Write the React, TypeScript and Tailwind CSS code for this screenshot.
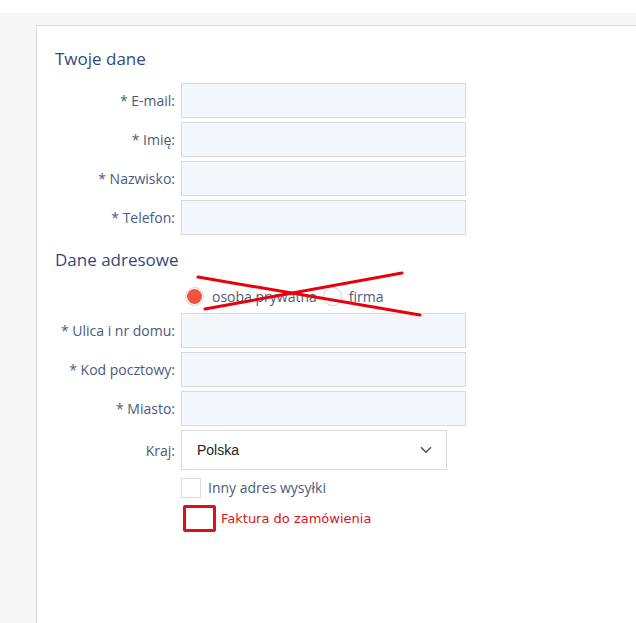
import { ChevronDown } from 'lucide-react';

const labelCls = "w-[144px] pr-[6px] text-right text-[14px] text-[#4b5a7a]"

function Field({ label }: { label: string }) {
  return (
    <div className="flex items-center h-[35px]">
      <label className={labelCls}>{label}</label>
      <input className="h-[35px] w-[285px] bg-[#f4f7fc] border border-[#d9d9d9] outline-none" />
    </div>
  )
}

export default function App() {
  return (
    <div className="relative h-[623px] w-[636px] overflow-hidden bg-white font-['Open_Sans',sans-serif]">
      <div className="mt-[13px] h-[610px] bg-[#f6f6f6] pl-[36px] pt-[12px]">
        <div className="h-full bg-white border-l border-t border-[#dcdcdc] pt-[21px]">
          {/* Twoje dane */}
          <h2 className="pl-[18px] text-[17px] leading-[24px] text-[#34497b]">Twoje dane</h2>
          <div className="mt-[12px] flex flex-col gap-[4px]">
            <Field label="* E-mail:" />
            <Field label="* Imię:" />
            <Field label="* Nazwisko:" />
            <Field label="* Telefon:" />
          </div>

          {/* Dane adresowe */}
          <h2 className="mt-[13px] pl-[18px] text-[17px] leading-[24px] text-[#34497b]">Dane adresowe</h2>
          <div className="mt-[12px] mb-[5px] flex h-[24px] items-center pl-[148px] text-[14px] text-[#4b5a7a]">
            <span className="flex h-[19px] w-[19px] items-center justify-center rounded-full border border-[#d4d4d4] bg-white">
              <span className="h-[15px] w-[15px] rounded-full bg-[#f2533f]" />
            </span>
            <span className="ml-[8px]">osoba prywatna</span>
            <span className="ml-[6px] h-[19px] w-[19px] rounded-full border border-[#d0d0d0] bg-white" />
            <span className="ml-[7px]">firma</span>
          </div>
          <div className="flex flex-col gap-[4px]">
            <Field label="* Ulica i nr domu:" />
            <Field label="* Kod pocztowy:" />
            <Field label="* Miasto:" />
            <div className="flex items-center h-[40px]">
              <label className={labelCls}>Kraj:</label>
              <div className="flex h-[40px] w-[266px] items-center justify-between border border-[#d9d9d9] bg-white pl-[15px] pr-[11px]">
                <span className="font-['Liberation_Sans',sans-serif] text-[14px] text-[#222]">Polska</span>
                <ChevronDown size={18} strokeWidth={2.2} className="text-[#555]" />
              </div>
            </div>
          </div>

          <div className="mt-[7px] flex items-center pl-[144px]">
            <span className="h-[20px] w-[20px] border border-[#dddddd] bg-white" />
            <span className="ml-[7px] text-[14px] text-[#4b5a7a]">Inny adres wysyłki</span>
          </div>
          <div className="mt-[7px] flex items-center pl-[146px]">
            <span className="h-[27px] w-[33px] rounded-[2px] border-[3px] border-[#e0101a] bg-white" />
            <span className="ml-[5px] font-['DejaVu_Sans',sans-serif] text-[13px] text-[#d8161d]">Faktura do zamówienia</span>
          </div>
        </div>
      </div>

      {/* red cross annotation */}
      <svg className="pointer-events-none absolute left-0 top-0" width="636" height="623">
        <line x1="198" y1="277" x2="420" y2="315" stroke="#e8000b" strokeWidth="3" strokeLinecap="round" />
        <line x1="205" y1="309" x2="402" y2="273" stroke="#e8000b" strokeWidth="3" strokeLinecap="round" />
      </svg>
    </div>
  )
}
